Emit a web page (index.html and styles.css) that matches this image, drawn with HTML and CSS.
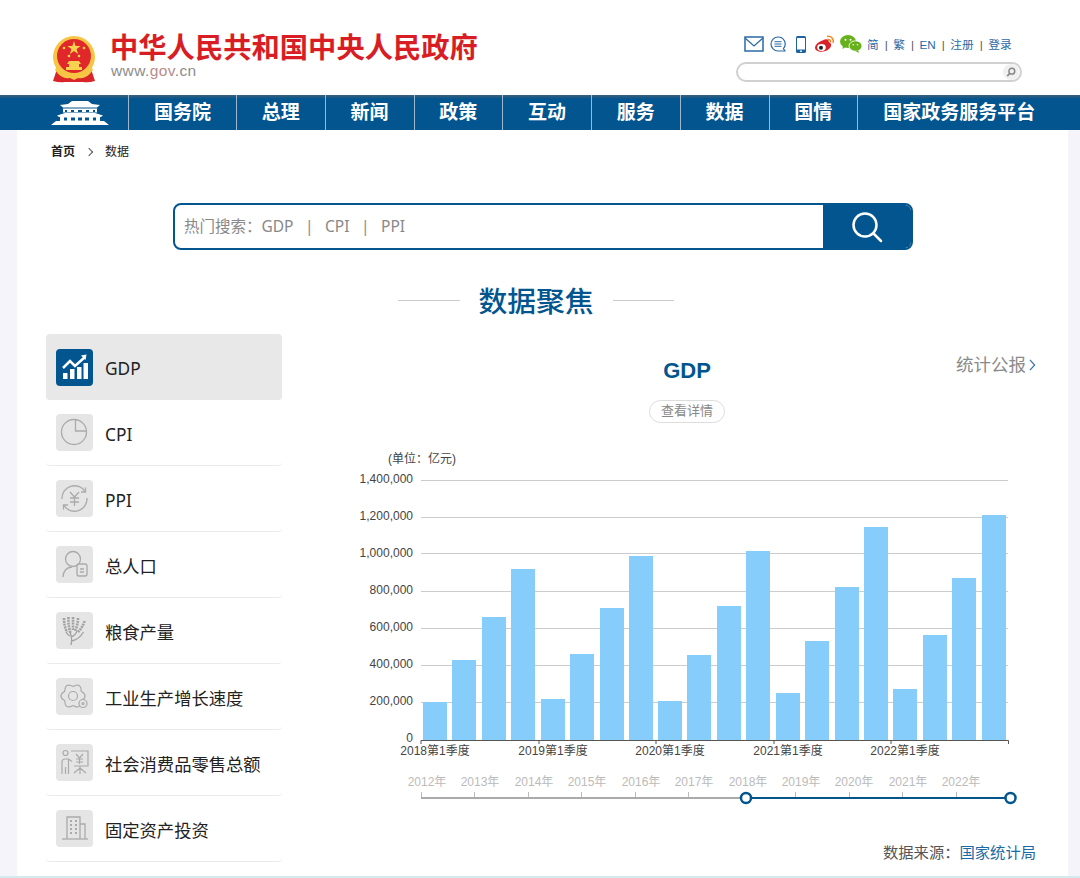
FILE: index.html
```html
<!DOCTYPE html>
<html lang="zh-CN">
<head>
<meta charset="utf-8">
<title>数据 - 中国政府网</title>
<link rel="stylesheet" href="styles.css">
</head>
<body>
<header class="top">
  <a class="brand">
    <svg class="emblem" viewBox="0 0 44 48" width="44" height="48">
      <path d="M5 33 L1 45 Q8 47 13 46 L31 46 Q36 47 43 45 L39 33Z" fill="#d9252a"/>
      <circle cx="22" cy="21" r="21" fill="#f6c544"/>
      <circle cx="22" cy="20" r="17" fill="#e0282a"/>
      <polygon points="22,5 23.6,10 28.6,10 24.6,13 26,18 22,15 18,18 19.4,13 15.4,10 20.4,10" fill="#f8d24f"/>
      <circle cx="12" cy="12" r="1.3" fill="#f8d24f"/><circle cx="32" cy="12" r="1.3" fill="#f8d24f"/>
      <circle cx="17" cy="20" r="1.3" fill="#f8d24f"/><circle cx="27" cy="20" r="1.3" fill="#f8d24f"/>
      <path d="M17 25h10l2 3h-2v3h3v3H14v-3h3v-3h-2z" fill="#f8d24f"/>
      <path d="M5 30 Q10 40 18 38 L22 41 L26 38 Q34 40 39 30 L41 34 Q34 44 26 42 L22 44 L18 42 Q10 44 3 34Z" fill="#f6c544"/>
    </svg>
    <div class="brand-text">
      <div class="brand-name">中华人民共和国中央人民政府</div>
      <div class="brand-url">www.<span class="brand-url-em">gov</span>.cn</div>
    </div>
  </a>
  <div class="tools">
    <div class="tool-row">
      <svg class="ti" viewBox="0 0 20 16" width="20" height="16"><rect x="1" y="1" width="18" height="14" fill="none" stroke="#2a6aa5" stroke-width="1.5"/><path d="M1 2l9 8 9-8" fill="none" stroke="#2a6aa5" stroke-width="1.3"/></svg>
      <svg class="ti" viewBox="0 0 16 16" width="16" height="16"><path d="M8 1a7 7 0 1 0 0 14h7l-1.6-2.4A7 7 0 0 0 8 1z" fill="none" stroke="#2a6aa5" stroke-width="1.2"/><path d="M4.500 5.700h7M4.500 8h7M4.500 10.300h7" stroke="#2a6aa5" stroke-width="1"/></svg>
      <svg class="ti" viewBox="0 0 10 17" width="10" height="17"><rect width="10" height="17" rx="1.500" fill="#1f639f"/><rect x="1" y="2" width="8" height="11.500" fill="#fff"/><circle cx="5" cy="15.200" r="0.900" fill="#fff"/></svg>
      <svg class="ti" viewBox="0 0 21 18" width="21" height="18"><path d="M8.500 5.500C12 3.500 15 4 14.800 7c3 1 3 4 .7 6.500C12 17 5 18 2 15 -1 12 3.500 7 8.500 5.500z" fill="#d9232a"/><ellipse cx="7.500" cy="12.500" rx="4.300" ry="3.400" fill="#fff"/><circle cx="7" cy="12.700" r="2" fill="#222"/><path d="M13 1.500c4-.8 7 2.200 6.200 6.500M13.500 4.500c2.200-.3 3.500 1 3 3" fill="none" stroke="#f08a24" stroke-width="1.500"/></svg>
      <svg class="ti" viewBox="0 0 22 18" width="22" height="18"><ellipse cx="8" cy="6.500" rx="8" ry="6.500" fill="#67b21c"/><path d="M3 10l-.5 4 4-2.500z" fill="#67b21c"/><ellipse cx="15.500" cy="11" rx="6.500" ry="5.200" fill="#67b21c" stroke="#fff" stroke-width=".8"/><path d="M18 15l1 3-3.500-2z" fill="#67b21c"/><circle cx="5.500" cy="4.800" r="1" fill="#fff"/><circle cx="10.500" cy="4.800" r="1" fill="#fff"/><circle cx="13.300" cy="9.800" r=".8" fill="#fff"/><circle cx="17.500" cy="9.800" r=".8" fill="#fff"/></svg>
      <nav class="langs">
        <a>简</a><i>|</i><a>繁</a><i>|</i><a>EN</a><i>|</i><a>注册</a><i>|</i><a>登录</a>
      </nav>
    </div>
    <div class="site-search">
      <span class="site-search-btn">
        <svg viewBox="0 0 12 12" width="10" height="10"><circle cx="7" cy="5" r="3.500" fill="none" stroke="#888" stroke-width="1.800"/><path d="M4.500 7.500L1.500 11" stroke="#888" stroke-width="2"/></svg>
      </span>
    </div>
  </div>
</header>

<nav class="mainnav">
  <a class="nav-home">
    <svg viewBox="0 0 58 24" width="58" height="24">
      <path d="M9 4L17 3 21 0h16l4 3 8 1-3 2.500H12z" fill="#fff"/>
      <rect x="12" y="7.500" width="34" height="4" fill="#fff"/>
      <path d="M14 9h2v2h-2zM20 9h3v2h-3zM27 9h4v2h-4zM35 9h3v2h-3zM42 9h2v2h-2z" fill="#02558f"/>
      <path d="M6 14.500l8-2.500h30l8 2.500-2 1.500H8z" fill="#fff"/>
      <path d="M9 16h40v4H9z" fill="#fff"/>
      <path d="M13 16.500h3v3h-3zM20 16.500h4v3h-4zM27 16.500h4v3h-4zM34 16.500h4v3h-4zM42 16.500h3v3h-3z" fill="#02558f"/>
      <path d="M0 24l5-4h48l5 4z" fill="#fff"/>
    </svg>
  </a>
  <a class="nav-item n1">国务院</a>
  <a class="nav-item">总理</a>
  <a class="nav-item">新闻</a>
  <a class="nav-item">政策</a>
  <a class="nav-item">互动</a>
  <a class="nav-item">服务</a>
  <a class="nav-item">数据</a>
  <a class="nav-item">国情</a>
  <a class="nav-item nlast">国家政务服务平台</a>
</nav>

<main class="page">
  <div class="crumb"><b>首页</b><span class="crumb-sep"></span><span>数据</span></div>

  <div class="bigsearch">
    <div class="bigsearch-input">热门搜索：GDP<i>|</i>CPI<i>|</i>PPI</div>
    <div class="bigsearch-btn">
      <svg viewBox="0 0 32 32" width="32" height="32"><circle cx="14" cy="14" r="11.500" fill="none" stroke="#fff" stroke-width="2.500"/><path d="M22.500 22.500L30 30" stroke="#fff" stroke-width="2.500" stroke-linecap="round"/></svg>
    </div>
  </div>

  <h2 class="focus"><span>数据聚焦</span></h2>

  <div class="panels">
    <ul class="side">
      <li class="side-item on">
        <span class="ic"><svg viewBox="0 0 37 37" width="37" height="37"><path d="M7 19l7-7 5 5 10-9" fill="none" stroke="#fff" stroke-width="2.500"/><path d="M25 6.500l5.500-1-1 5.500z" fill="#fff"/><rect x="7" y="24" width="4.500" height="6" fill="#fff"/><rect x="14" y="20" width="4.500" height="10" fill="#fff"/><rect x="21" y="18" width="4.500" height="12" fill="#fff"/><rect x="27.500" y="14" width="4.500" height="16" fill="#fff"/></svg></span>GDP
      </li>
      <li class="side-item">
        <span class="ic"><svg viewBox="0 0 37 37" width="37" height="37" fill="none" stroke="#aaa" stroke-width="1.300"><circle cx="18" cy="18" r="12.500"/><path d="M19.500 5.500V17H30.500"/></svg></span>CPI
      </li>
      <li class="side-item">
        <span class="ic"><svg viewBox="0 0 37 37" width="37" height="37" fill="none" stroke="#aaa" stroke-width="1.300"><path d="M6 19A12.500 12.500 0 0 1 29 11.500M31 18A12.500 12.500 0 0 1 8 25.500"/><path d="M29.500 7.500v4.500h-4.500M7.500 29.500v-4.500h4.500"/><path d="M14 12l4.500 5 4.500-5M18.500 17v9M14 18h9M14 22h9"/></svg></span>PPI
      </li>
      <li class="side-item">
        <span class="ic"><svg viewBox="0 0 37 37" width="37" height="37" fill="none" stroke="#aaa" stroke-width="1.300"><circle cx="17" cy="13" r="7.500"/><path d="M7 31c0-6 4-10 9-10"/><rect x="21" y="18" width="10" height="12" rx="2"/><path d="M24 23h4M24 26h4"/></svg></span>总人口
      </li>
      <li class="side-item">
        <span class="ic"><svg viewBox="0 0 37 37" width="37" height="37" fill="none" stroke="#a2a2a2"><path d="M15 33c1-4 1-8-1-13M15.500 29c5-1 9-4 12-9M15 25c3-1 5-3 6-6M10 20c1 2 2 3 4 4" stroke-width="1.300"/><path d="M8 6Q8 14 11 20M12.500 5Q12 13 14.500 21M17 5V18M22 6Q22 13 19 19M28.500 9Q27 15 22 20" stroke-width="2.600" stroke-dasharray="2 .8"/></svg></span>粮食产量
      </li>
      <li class="side-item">
        <span class="ic"><svg viewBox="0 0 37 37" width="37" height="37" fill="none" stroke="#aaa" stroke-width="1.200" stroke-linejoin="round"><path d="M25.200 22.750Q33 18 25.200 13.250Q25 4.100 17 8.500Q9 4.100 8.800 13.250Q1 18 8.800 22.750Q9 31.900 17 27.500Q25 31.900 25.200 22.750z"/><circle cx="17" cy="18" r="4.500"/><circle cx="27" cy="25.500" r="4" fill="#e5e5e5"/><circle cx="27" cy="25.500" r="1"/></svg></span>工业生产增长速度
      </li>
      <li class="side-item">
        <span class="ic"><svg viewBox="0 0 37 37" width="37" height="37" fill="none" stroke="#aaa" stroke-width="1.200"><circle cx="9.500" cy="9" r="2.500"/><path d="M6 30V18c0-2 1-3 3-3h3.500l3.500 2.500M12.500 15v15M9.500 23v7"/><path d="M15 7h17v15H18"/><path d="M20 10l3.500 4 3.500-4M23.500 14v6M20 15h7M20 18h7M18 29l6-5 6 5M24 22v8"/></svg></span>社会消费品零售总额
      </li>
      <li class="side-item">
        <span class="ic"><svg viewBox="0 0 37 37" width="37" height="37" fill="none" stroke="#aaa" stroke-width="1.300"><path d="M6 29h26"/><path d="M11 29V7h13v22M24 14h5v15"/><path d="M14 11h2M19 11h2M14 15h2M19 15h2M14 19h2M19 19h2M14 23h2M19 23h2" stroke-width="2"/></svg></span>固定资产投资
      </li>
    </ul>

    <section class="chartbox">
      <div class="chart-head">
        <span></span>
        <h3 class="chart-title">GDP</h3>
        <a class="report">统计公报<svg viewBox="0 0 8 14" width="7" height="12"><path d="M1 1l5.500 6L1 13" fill="none" stroke="#3b78ad" stroke-width="1.500"/></svg></a>
      </div>
      <a class="detail">查看详情</a>
      <svg class="chart" viewBox="338 449 700 361" width="700" height="361">
        <text class="t-unit" x="388" y="463">(单位：亿元)</text>
        <g class="grid">
          <path d="M421 480.500H1008M421 517.500H1008M421 553.500H1008M421 591.500H1008M421 628.500H1008M421 665.500H1008M421 702.500H1008"/>
        </g>
        <g class="t-y">
          <text x="413" y="483">1,400,000</text>
          <text x="413" y="520">1,200,000</text>
          <text x="413" y="557">1,000,000</text>
          <text x="413" y="594">800,000</text>
          <text x="413" y="631">600,000</text>
          <text x="413" y="668">400,000</text>
          <text x="413" y="705">200,000</text>
          <text x="413" y="742">0</text>
        </g>
        <g class="bars">
          <rect x="423" y="702" width="24" height="38"/><rect x="452" y="660" width="24" height="80"/>
          <rect x="482" y="617" width="24" height="123"/><rect x="511" y="569" width="24" height="171"/>
          <rect x="541" y="699" width="24" height="41"/><rect x="570" y="654" width="24" height="86"/>
          <rect x="600" y="608" width="24" height="132"/><rect x="629" y="556" width="24" height="184"/>
          <rect x="658" y="701" width="24" height="39"/><rect x="687" y="655" width="24" height="85"/>
          <rect x="717" y="606" width="24" height="134"/><rect x="746" y="551" width="24" height="189"/>
          <rect x="776" y="693" width="24" height="47"/><rect x="805" y="641" width="24" height="99"/>
          <rect x="835" y="587" width="24" height="153"/><rect x="864" y="527" width="24" height="213"/>
          <rect x="893" y="689" width="24" height="51"/><rect x="923" y="635" width="24" height="105"/>
          <rect x="952" y="578" width="24" height="162"/><rect x="982" y="515" width="24" height="225"/>
        </g>
        <path class="axis" d="M421 744V740.500H1008.500V744M539 740v4M656 740v4M774 740v4M891 740v4"/>
        <g class="t-x">
          <text x="435" y="755">2018第1季度</text>
          <text x="553" y="755">2019第1季度</text>
          <text x="670" y="755">2020第1季度</text>
          <text x="788" y="755">2021第1季度</text>
          <text x="905" y="755">2022第1季度</text>
        </g>
        <g class="t-year">
          <text x="427" y="786">2012年</text><text x="480" y="786">2013年</text><text x="534" y="786">2014年</text>
          <text x="587" y="786">2015年</text><text x="641" y="786">2016年</text><text x="694" y="786">2017年</text>
          <text x="748" y="786">2018年</text><text x="801" y="786">2019年</text><text x="854" y="786">2020年</text>
          <text x="908" y="786">2021年</text><text x="961" y="786">2022年</text>
        </g>
        <path class="slide-ticks" d="M421.500 792v6M474.500 792v6M528.500 792v6M581.500 792v6M635.500 792v6M688.500 792v6M795.500 792v6M849.500 792v6M902.500 792v6M956.500 792v6"/>
        <path class="slide-off" d="M421 798H746"/>
        <path class="slide-on" d="M746 798H1010"/>
        <circle class="handle" cx="746" cy="798" r="5"/>
        <circle class="handle" cx="1010.500" cy="798" r="5"/>
      </svg>
      <p class="source">数据来源：<a>国家统计局</a></p>
    </section>
  </div>
</main>
<div class="foot-line"></div>
</body>
</html>
```

FILE: styles.css
```css
* { box-sizing: border-box; }
html, body { margin: 0; padding: 0; }
body {
  height: 878px;
  overflow: hidden;
  background: #f4f4fa;
  font-family: "Noto Sans", "Noto Sans CJK SC", sans-serif;
  color: #333;
}
a { color: inherit; text-decoration: none; }

/* header */
.top {
  height: 95px;
  background: #fff;
  display: flex;
  justify-content: space-between;
  padding: 33px 58px 0 52px;
}
.brand { display: flex; align-items: flex-start; }
.emblem { margin-top: 3px; flex: none; }
.brand-text { margin-left: 14px; }
.brand-name {
  font: 700 28.3px/30px "Liberation Sans", "Noto Sans CJK SC", sans-serif;
  color: #d81e24;
  white-space: nowrap;
}
.brand-url {
  font: 15.500px/16px "Liberation Sans", sans-serif;
  margin: 0 0 0 1px;
  color: #8c8c8c;
  letter-spacing: .4px;
}
.brand-url-em { color: #b98a8a; }
.tools { width: 286px; }
.tool-row { display: flex; align-items: center; height: 22px; margin-left: 8px; }
.ti { flex: none; margin-right: 5px; }
.ti:nth-child(2) { margin-left: 1px; margin-right: 10px; }
.ti:nth-child(3) { margin-right: 8px; }
.langs {
  display: flex;
  align-items: center;
  margin-left: 0;
  padding-top: 2px;
  font: 11.700px/16px "Liberation Sans", "Noto Sans CJK SC", sans-serif;
  color: #2a6aa5;
  white-space: nowrap;
}
.langs i { font-style: normal; color: #555; margin: 0 5.500px 0 6px; }
.site-search {
  position: relative;
  height: 20px;
  margin-top: 7px;
  border: 2px solid #d0d0d0;
  border-radius: 10px;
  background: #fff;
  display: flex;
  justify-content: flex-end;
}
.site-search-btn {
  width: 16px;
  height: 16px;
  border-radius: 8px;
  margin-right: 1px;
  background: #f0f0f0;
  display: flex;
  align-items: center;
  justify-content: center;
}

/* main navigation */
.mainnav {
  height: 35px;
  background: linear-gradient(#3f5f78 0, #02558f 4px, #02558f 100%);
  display: flex;
  color: #fff;
  font: 700 19px/32px "Noto Sans CJK SC", sans-serif;
  padding-left: 51px;
}
.nav-home { width: 77px; display: flex; align-items: center; padding-top: 1px; }
.nav-item {
  width: 88.750px;
  text-align: center;
  border-left: 1px solid #9db8cc;
  white-space: nowrap;
}
.n1 { width: 108px; }
.nlast { width: auto; padding: 0 26px 0 25px; }

/* page */
.page {
  width: 1051px;
  height: 746px;
  margin-left: 17px;
  background: #fff;
  overflow: hidden;
}
.crumb {
  display: flex;
  align-items: center;
  height: 12px;
  margin: 16px 0 0 34px;
  font-size: 12px;
  line-height: 12px;
  color: #222;
}
.crumb b { font-weight: 700; }
.crumb-sep {
  width: 6px;
  height: 6px;
  border-top: 1px solid #555;
  border-right: 1px solid #555;
  transform: rotate(45deg);
  margin: 0 13px 0 11px;
}
.bigsearch {
  display: flex;
  width: 740px;
  height: 47px;
  margin: 45px 0 0 156px;
  border: 2px solid #02558f;
  border-radius: 8px;
  overflow: hidden;
}
.bigsearch-input {
  flex: 1;
  padding-left: 9px;
  font-size: 15.500px;
  line-height: 43px;
  color: #888;
}
.bigsearch-input i { font-style: normal; margin: 0 11.500px; }
.bigsearch-btn {
  width: 88px;
  background: #02558f;
  display: flex;
  align-items: center;
  justify-content: center;
}
.focus {
  display: flex;
  align-items: center;
  width: 276px;
  margin: 29px 0 0 381px;
  font: 500 28.750px/42px "Noto Sans CJK SC", sans-serif;
  color: #02558f;
}
.focus span { margin: 0 19px; white-space: nowrap; }
.focus::before, .focus::after {
  content: "";
  flex: 1;
  height: 1px;
  background: #ccc;
}
.panels {
  display: flex;
  margin: 13px 0 0 29px;
}
.side {
  width: 236px;
  flex: none;
  list-style: none;
  margin: 0;
  padding: 0;
}
.side-item {
  display: flex;
  align-items: center;
  height: 66px;
  padding: 5px 0 0 10px;
  border-bottom: 1px solid #eaeaea;
  border-radius: 0 0 4px 4px;
  font-size: 17.300px;
  line-height: 24px;
  color: #222;
  white-space: nowrap;
}
.side-item.on { background: #e8e8e8; border-radius: 4px; border-bottom: 0; padding-top: 4px; }
.ic {
  width: 37px;
  height: 37px;
  margin: -6px 12px 0 0;
  border-radius: 4px;
  background: #e5e5e5;
  flex: none;
  display: block;
}
.ic svg { display: block; }
.on .ic { background: #02558f; margin-top: -4px; }

.chartbox { width: 698px; margin-left: 56px; flex: none; }
.chart-head {
  display: grid;
  grid-template-columns: 1fr auto 1fr;
  height: 49px;
}
.chart-title {
  margin: 21px 0 0;
  font: 700 22px/32px "Liberation Sans", sans-serif;
  color: #02558f;
}
.report {
  justify-self: end;
  font: 17.500px/24px "Liberation Sans", "Noto Sans CJK SC", sans-serif;
  margin-top: 19px;
  color: #8a8a8a;
  white-space: nowrap;
}
.report svg { margin-left: 3px; }
.detail {
  display: block;
  width: 76px;
  height: 23px;
  margin: 17px auto 0;
  border: 1px solid #ddd;
  border-radius: 12px;
  text-align: center;
  font: 13px/20px "Liberation Sans", "Noto Sans CJK SC", sans-serif;
  color: #888;
}
.chart { display: block; margin-top: 26px; overflow: visible; }
.chart text { font-family: "Liberation Sans", "Noto Sans CJK SC", sans-serif; font-size: 12px; }
.t-unit { fill: #444; }
.grid path { stroke: #ccc; stroke-width: 1; fill: none; }
.t-y text { fill: #444; text-anchor: end; }
.bars rect { fill: #87cdfb; }
.axis { stroke: #555; stroke-width: 1; fill: none; }
.t-x text { fill: #444; text-anchor: middle; }
.t-year text { fill: #bbb; text-anchor: middle; }
.slide-ticks { stroke: #bbb; stroke-width: 1; fill: none; }
.slide-off { stroke: #aaa; stroke-width: 2; fill: none; }
.slide-on { stroke: #02558f; stroke-width: 2; fill: none; }
.handle { fill: #fff; stroke: #02558f; stroke-width: 2.500; }
.source {
  margin: 33px 0 0;
  text-align: right;
  font: 15.300px/20px "Liberation Sans", "Noto Sans CJK SC", sans-serif;
  color: #555;
}
.source a { color: #1c6aa5; }
.foot-line {
  height: 2px;
  background: #d3eaee;
  margin-top: 0;
}
```
